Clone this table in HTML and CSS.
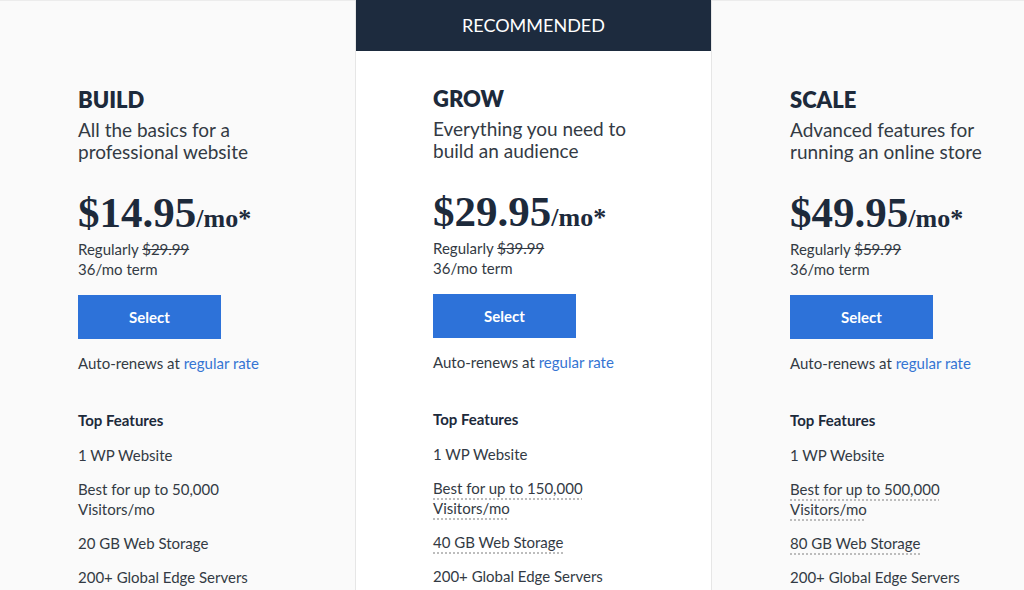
FILE: index.html
```html
<!DOCTYPE html>
<html>
<head>
<meta charset="utf-8">
<title>Plans</title>
<link rel="stylesheet" href="styles.css">
</head>
<body>
<div id="app">
	<main class="plans">

		<section class="plan">
			<div class="plan-body">
				<h2 class="plan-name">BUILD</h2>
				<p class="plan-desc">All the basics for a<br>professional website</p>
				<div class="price">$14.95<span class="per">/mo*</span></div>
				<p class="regular">Regularly <s>$29.99</s><br>36/mo term</p>
				<a class="btn-select" href="#">Select</a>
				<p class="renew">Auto-renews at <a href="#">regular rate</a></p>
				<h3 class="feat-title">Top Features</h3>
				<ul class="features">
					<li>1 WP Website</li>
					<li>Best for up to 50,000<br>Visitors/mo</li>
					<li>20 GB Web Storage</li>
					<li>200+ Global Edge Servers</li>
				</ul>
			</div>
		</section>

		<section class="plan plan-featured">
			<div class="badge">RECOMMENDED</div>
			<div class="plan-body">
				<h2 class="plan-name">GROW</h2>
				<p class="plan-desc">Everything you need to<br>build an audience</p>
				<div class="price">$29.95<span class="per">/mo*</span></div>
				<p class="regular">Regularly <s>$39.99</s><br>36/mo term</p>
				<a class="btn-select" href="#">Select</a>
				<p class="renew">Auto-renews at <a href="#">regular rate</a></p>
				<h3 class="feat-title">Top Features</h3>
				<ul class="features">
					<li>1 WP Website</li>
					<li><span class="tip">Best for up to 150,000<br>Visitors/mo</span></li>
					<li><span class="tip">40 GB Web Storage</span></li>
					<li>200+ Global Edge Servers</li>
				</ul>
			</div>
		</section>

		<section class="plan">
			<div class="plan-body">
				<h2 class="plan-name">SCALE</h2>
				<p class="plan-desc">Advanced features for<br>running an online store</p>
				<div class="price">$49.95<span class="per">/mo*</span></div>
				<p class="regular">Regularly <s>$59.99</s><br>36/mo term</p>
				<a class="btn-select" href="#">Select</a>
				<p class="renew">Auto-renews at <a href="#">regular rate</a></p>
				<h3 class="feat-title">Top Features</h3>
				<ul class="features">
					<li>1 WP Website</li>
					<li><span class="tip">Best for up to 500,000<br>Visitors/mo</span></li>
					<li><span class="tip">80 GB Web Storage</span></li>
					<li>200+ Global Edge Servers</li>
				</ul>
			</div>
		</section>

	</main>
</div>
</body>
</html>
```

FILE: styles.css
```css
html,
body {
	margin: 0;
	padding: 0;
	height: 100%;
	overflow: hidden;
}
#app {
	font-family: 'Lato', 'Open Sans', Arial, sans-serif;
	font-size: 15px;
	color: #333a44;
	background: #fafafa;
	height: 100%;
}
.plans {
	display: grid;
	grid-template-columns: 356px 356px 356px;
	height: 100%;
}
.plan {
	background: #fafafa;
	border-top: 1px solid #ececec;
	padding-top: 86px;
}
.plan-featured {
	background: #fff;
	border-top: 0;
	border-left: 1px solid #e6e6e6;
	border-right: 1px solid #e6e6e6;
	padding-top: 0;
	margin-left: -1px;
}
.badge {
	height: 51px;
	background: #1d2b3e;
	color: #fff;
	font-size: 18px;
	line-height: 51px;
	text-align: center;
	margin-bottom: 35px;
}
.plan-body {
	padding-left: 78px;
}
.plan-featured .plan-body {
	padding-left: 77px;
}
.plan-name {
	margin: 0;
	font-size: 22px;
	line-height: 26px;
	font-weight: 800;
	color: #1d2a3b;
}
.plan-desc {
	margin: 6px 0 0;
	font-size: 19px;
	line-height: 22px;
	color: #333a44;
}
.price {
	margin-top: 26px;
	height: 48px;
	font-family: 'Liberation Serif', 'Times New Roman', serif;
	font-weight: 700;
	font-size: 43px;
	line-height: 48px;
	color: #1d2a3b;
}
.price .per {
	font-size: 26px;
	line-height: 1;
}
.regular {
	margin: 2px 0 0;
	line-height: 20px;
}
.btn-select {
	display: flex;
	align-items: center;
	justify-content: center;
	width: 143px;
	height: 44px;
	margin-top: 16px;
	background: #2d72d9;
	color: #fff;
	font-weight: 700;
	text-decoration: none;
}
.renew {
	margin: 14px 0 0;
	line-height: 20px;
}
.renew a {
	color: #3575d3;
	text-decoration: none;
}
.feat-title {
	margin: 37px 0 0;
	font-size: 15px;
	line-height: 20px;
	font-weight: 700;
	color: #1d2a3b;
}
.features {
	list-style: none;
	margin: 15px 0 0;
	padding: 0;
	display: flex;
	flex-direction: column;
	gap: 14px;
}
.features li {
	line-height: 20px;
}
.tip {
	text-decoration: underline dotted #a8a8a8;
	text-underline-offset: 5px;
}
```
